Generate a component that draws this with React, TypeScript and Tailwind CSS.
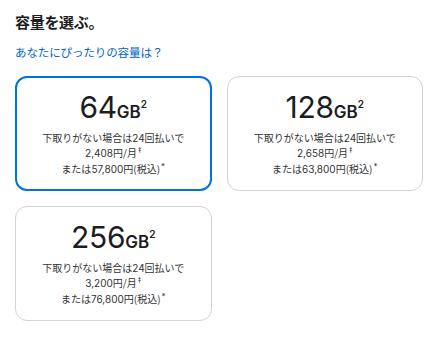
import React from "react";

type Opt = { cap: string; monthly: string; total: string; selected?: boolean };

const opts: Opt[] = [
  { cap: "64", monthly: "2,408", total: "57,800", selected: true },
  { cap: "128", monthly: "2,658", total: "63,800" },
  { cap: "256", monthly: "3,200", total: "76,800" },
];

function J({ children }: { children: React.ReactNode }) {
  return <span className="font-['Noto_Sans_CJK_JP',sans-serif]">{children}</span>;
}

function Card({ o }: { o: Opt }) {
  return (
    <div
      className={
        o.selected
          ? "h-[115px] rounded-[12px] border-2 border-[#0071e3] flex flex-col items-center pt-[13px] text-[#1d1d1f]"
          : "h-[115px] rounded-[12px] border border-[#d2d2d7] flex flex-col items-center pt-[14px] text-[#1d1d1f]"
      }
    >
      <div className="leading-[32px] whitespace-nowrap">
        <span className="text-[30px] tracking-[-0.3px]">{o.cap}</span>
        <span className="text-[17px] font-semibold">GB</span>
        <span className="relative top-[-10px] text-[10px] font-semibold">2</span>
      </div>
      <div className="mt-[1px] flex flex-col items-center text-[10px] leading-[14.5px] text-[#333336]">
        <span>
          <J>下取りがない場合は</J>24<J>回払いで</J>
        </span>
        <span>
          {o.monthly}
          <J>円/月</J>
          <span className="relative top-[-4px] ml-[1px] text-[7px]">‡</span>
        </span>
        <span>
          <J>または</J>
          {o.total}
          <J>円(税込)</J>
          <span className="relative top-[-4px] ml-[1px] text-[8px]">*</span>
        </span>
      </div>
    </div>
  );
}

export default function App() {
  return (
    <div className="w-[435px] h-[341px] bg-white px-[15px] pt-[10px] font-['Inter','Noto_Sans_CJK_JP',sans-serif]">
      <h2 className="text-[15px] font-bold leading-[24px] text-[#1d1d1f] tracking-[-0.3px] font-['Noto_Sans_CJK_JP',sans-serif]">
        容量を選ぶ。
      </h2>
      <a className="block mt-[9px] text-[11.5px] leading-[18px] text-[#0066cc] tracking-[-0.1px] font-['Noto_Sans_CJK_JP',sans-serif]">
        あなたにぴったりの容量は？
      </a>
      <div className="mt-[15px] grid grid-cols-2 gap-[15px] w-[408px]">
        {opts.map((o) => (
          <Card key={o.cap} o={o} />
        ))}
      </div>
    </div>
  );
}
